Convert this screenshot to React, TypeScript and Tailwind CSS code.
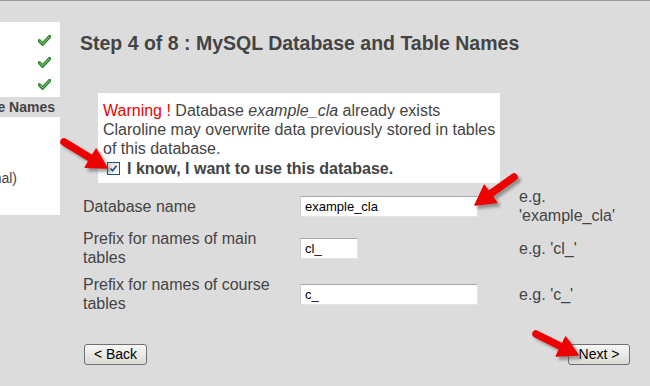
import React from "react";

function Check() {
  return (
    <svg width="13" height="11" viewBox="0 0 13 11">
      <path d="M1.5 5.8 L4.6 9.2 L11.6 1.6" fill="none" stroke="#2f7d2f" strokeWidth="3.4" strokeLinecap="round" strokeLinejoin="round" />
      <path d="M1.8 5.9 L4.6 8.9 L11.3 1.9" fill="none" stroke="#6cc06c" strokeWidth="1.2" strokeLinecap="round" strokeLinejoin="round" />
    </svg>
  );
}

type Pt = [number, number];

function Arrow({ tail, tip }: { tail: Pt; tip: Pt }) {
  const dx = tip[0] - tail[0];
  const dy = tip[1] - tail[1];
  const len = Math.hypot(dx, dy);
  const ux = dx / len;
  const uy = dy / len;
  const hl = 19;
  const hw = 10.5;
  const bx = tip[0] - ux * hl;
  const by = tip[1] - uy * hl;
  const px = -uy;
  const py = ux;
  const head = `${tip[0]},${tip[1]} ${bx + px * hw},${by + py * hw} ${bx - px * hw},${by - py * hw}`;
  const shaft = { x1: tail[0], y1: tail[1], x2: bx + ux * 3, y2: by + uy * 3 };
  return (
    <g>
      <g transform="translate(3,3)" filter="url(#blur)" opacity="0.55">
        <line {...shaft} stroke="#555" strokeWidth="7.5" strokeLinecap="round" />
        <polygon points={head} fill="#555" strokeLinejoin="round" stroke="#555" strokeWidth="2" />
      </g>
      <line {...shaft} stroke="#ee0000" strokeWidth="7.5" strokeLinecap="round" />
      <polygon points={head} fill="#ee0000" stroke="#ee0000" strokeWidth="1.5" strokeLinejoin="round" />
    </g>
  );
}

function Field({ value, w }: { value: string; w: string }) {
  return (
    <div
      className={`${w} h-[21px] shrink-0 bg-white border border-[#e4e4e4] border-t-[#a8a8a8] border-l-[#cfcfcf] pl-[4px] flex items-center text-[13px] text-black`}
    >
      {value}
    </div>
  );
}

export default function App() {
  return (
    <div className="relative w-[650px] h-[386px] overflow-hidden bg-[#dcdcdc] border-t border-[#9a9a9a] font-['Liberation_Sans',Arial,sans-serif] text-[#444]">
      <div className="flex">
        <aside className="w-[60px] shrink-0 overflow-hidden pt-[21px]">
          <div className="bg-white h-[75px] pt-[7px] flex flex-col">
            <div className="h-[22px] flex items-center justify-end pr-[9px]">
              <Check />
            </div>
            <div className="h-[22px] flex items-center justify-end pr-[9px]">
              <Check />
            </div>
            <div className="h-[22px] flex items-center justify-end pr-[9px]">
              <Check />
            </div>
          </div>
          <div className="h-[20px] flex items-center justify-end pr-[5px] whitespace-nowrap text-[14px] font-bold">
            Database and Table Names
          </div>
          <div className="bg-white h-[98px] pt-[52px] text-[14px] leading-[18px]">
            <div className="w-[17px] flex justify-end whitespace-nowrap">(optional)</div>
          </div>
        </aside>

        <main className="ml-[20px] w-[550px] flex flex-col">
          <h1 className="mt-[31px] text-[19.5px] leading-[22px] font-bold text-[#444] whitespace-nowrap">
            Step 4 of 8 : MySQL Database and Table Names
          </h1>

          <div className="ml-[18px] mt-[39px] w-[402px] h-[90px] bg-white pl-[5px] pt-[8px] text-[16px] leading-[19px] text-[#444]">
            <div>
              <span className="text-[#ee0000]">Warning !</span> Database <i>example_cla</i> already exists
            </div>
            <div>Claroline may overwrite data previously stored in tables</div>
            <div>of this database.</div>
            <div className="flex items-center h-[20px]">
              <span className="ml-[4px] w-[13px] h-[13px] border border-[#1c5180] bg-gradient-to-br from-[#dcdcd6] to-white flex items-center justify-center">
                <svg width="9" height="9" viewBox="0 0 9 9">
                  <path d="M1.5 4.5 L3.6 6.8 L7.6 1.8" fill="none" stroke="#21469c" strokeWidth="1.6" />
                </svg>
              </span>
              <span className="ml-[7px] font-bold">I know, I want to use this database.</span>
            </div>
          </div>

          <div className="pl-[3px] text-[16px] leading-[19px] text-[#444]">
            <div className="mt-[4px] h-[38px] flex items-center">
              <div className="w-[217px] shrink-0">Database name</div>
              <Field value="example_cla" w="w-[178px]" />
              <div className="ml-[41px] w-[110px]">e.g. 'example_cla'</div>
            </div>
            <div className="mt-[4px] h-[38px] flex items-center">
              <div className="w-[200px] mr-[17px] shrink-0">Prefix for names of main tables</div>
              <Field value="cl_" w="w-[58px]" />
              <div className="ml-[161px] w-[110px]">e.g. 'cl_'</div>
            </div>
            <div className="mt-[8px] h-[38px] flex items-center">
              <div className="w-[200px] mr-[17px] shrink-0">Prefix for names of course tables</div>
              <Field value="c_" w="w-[178px]" />
              <div className="ml-[41px] w-[110px]">e.g. 'c_'</div>
            </div>
          </div>

          <div className="mt-[31px] pl-[4px] flex justify-between">
            <button className="w-[63px] h-[21px] rounded-[3px] border border-[#707070] bg-gradient-to-b from-[#f6f6f6] to-[#dbdbd5] text-[14px] text-black flex items-center justify-center">
              &lt; Back
            </button>
            <button className="w-[62px] h-[21px] rounded-[3px] border border-[#707070] bg-gradient-to-b from-[#f6f6f6] to-[#dbdbd5] text-[14px] text-black flex items-center justify-center">
              Next &gt;
            </button>
          </div>
        </main>
      </div>

      <svg className="absolute left-0 top-0 pointer-events-none" width="650" height="386" viewBox="0 0 650 386">
        <defs>
          <filter id="blur" x="-20%" y="-20%" width="140%" height="140%">
            <feGaussianBlur stdDeviation="1.5" />
          </filter>
        </defs>
        <Arrow tail={[64, 141]} tip={[107, 167]} />
        <Arrow tail={[514, 176]} tip={[475, 204]} />
        <Arrow tail={[536, 333]} tip={[578, 354]} />
      </svg>
    </div>
  );
}
